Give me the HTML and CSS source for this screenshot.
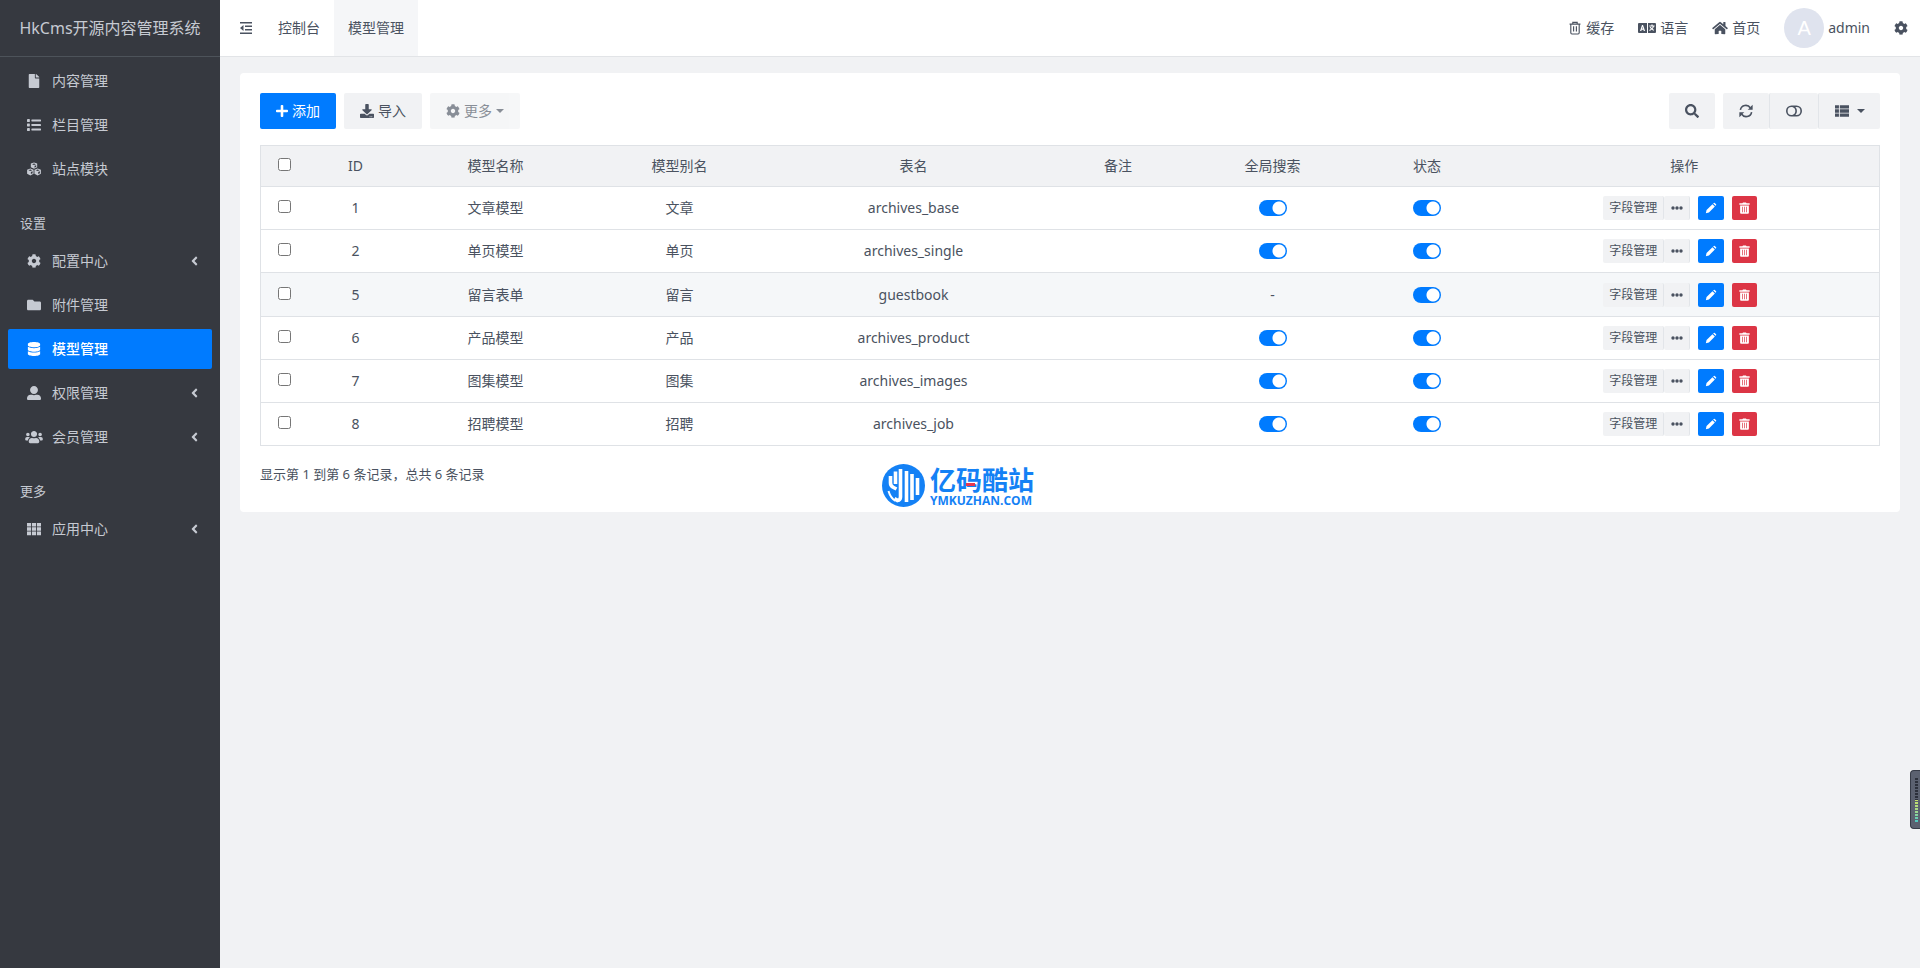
FILE: index.html
```html
<!DOCTYPE html>
<html lang="zh-CN">
<head>
<meta charset="utf-8">
<title>模型管理 - HkCms开源内容管理系统</title>
<link rel="stylesheet" href="styles.css">
</head>
<body>
<svg class="sprite" aria-hidden="true">
  <symbol id="i-file" viewBox="0 0 384 512"><path d="M224 136V0H24C10.700 0 0 10.700 0 24v464c0 13.300 10.700 24 24 24h336c13.300 0 24-10.700 24-24V160H248c-13.200 0-24-10.800-24-24zm160-14.100v6.100H256V0h6.100c6.400 0 12.500 2.500 17 7l97.900 98c4.500 4.500 7 10.600 7 16.900z"/></symbol>
  <symbol id="i-list" viewBox="0 0 512 512"><rect x="0" y="40" width="104" height="104" rx="16"/><rect x="0" y="204" width="104" height="104" rx="16"/><rect x="0" y="368" width="104" height="104" rx="16"/><rect x="160" y="56" width="352" height="72" rx="16"/><rect x="160" y="220" width="352" height="72" rx="16"/><rect x="160" y="384" width="352" height="72" rx="16"/></symbol>
  <symbol id="i-cubes" viewBox="0 0 512 512"><path fill-rule="evenodd" d="M256 14l116 44v134l-116 52-116-52V58zM256 52l-72 26 72 28 72-28zM276 140v66l62-28v-62zM122 236l118 46v150l-118 58L4 432V282zM122 274l-72 28 72 30 72-30zM142 366v76l62-32v-68zM390 236l118 46v150l-118 58-118-58V282zM390 274l-72 28 72 30 72-30zM410 366v76l62-32v-68z"/></symbol>
  <symbol id="i-cog" viewBox="0 0 512 512"><path d="M487.400 315.700l-42.600-24.600c4.300-23.200 4.300-47 0-70.200l42.600-24.600c4.900-2.800 7.100-8.600 5.500-14-11.100-35.600-30-67.800-54.700-94.600-3.800-4.100-10-5.100-14.800-2.300L380.800 110c-17.900-15.400-38.500-27.300-60.800-35.100V25.800c0-5.600-3.900-10.500-9.400-11.700-36.700-8.200-74.300-7.800-109.200 0-5.500 1.200-9.400 6.100-9.400 11.700V75c-22.200 7.900-42.800 19.800-60.800 35.100L88.700 85.500c-4.900-2.800-11-1.900-14.800 2.300-24.700 26.700-43.600 58.900-54.700 94.600-1.700 5.400.6 11.200 5.500 14L67.300 221c-4.300 23.200-4.300 47 0 70.200l-42.600 24.600c-4.900 2.800-7.100 8.600-5.500 14 11.100 35.600 30 67.800 54.700 94.600 3.800 4.100 10 5.100 14.800 2.300l42.600-24.600c17.900 15.400 38.500 27.300 60.800 35.100v49.200c0 5.600 3.900 10.500 9.400 11.700 36.700 8.200 74.300 7.800 109.200 0 5.500-1.200 9.400-6.100 9.400-11.700v-49.200c22.200-7.900 42.800-19.800 60.800-35.100l42.600 24.600c4.900 2.800 11 1.900 14.800-2.300 24.700-26.700 43.600-58.900 54.700-94.600 1.500-5.500-.7-11.300-5.600-14.100zM256 336c-44.100 0-80-35.900-80-80s35.900-80 80-80 80 35.900 80 80-35.900 80-80 80z"/></symbol>
  <symbol id="i-folder" viewBox="0 0 512 512"><path d="M464 128H272l-64-64H48C21.500 64 0 85.500 0 112v288c0 26.500 21.500 48 48 48h416c26.500 0 48-21.500 48-48V176c0-26.500-21.500-48-48-48z"/></symbol>
  <symbol id="i-db" viewBox="0 0 448 512"><path d="M448 73.143v45.714C448 159.143 347.667 192 224 192S0 159.143 0 118.857V73.143C0 32.857 100.333 0 224 0s224 32.857 224 73.143zM448 176v102.857C448 319.143 347.667 352 224 352S0 319.143 0 278.857V176c48.125 33.143 136.208 48.572 224 48.572S399.874 209.143 448 176zm0 160v102.857C448 479.143 347.667 512 224 512S0 479.143 0 438.857V336c48.125 33.143 136.208 48.572 224 48.572S399.874 369.143 448 336z"/></symbol>
  <symbol id="i-user" viewBox="0 0 512 512"><path d="M256 288c79.500 0 144-64.500 144-144S335.500 0 256 0 112 64.500 112 144s64.500 144 144 144zm128 32h-55.100c-22.200 10.200-46.900 16-72.900 16s-50.600-5.800-72.900-16H128C57.300 320 0 377.300 0 448v16c0 26.500 21.500 48 48 48h416c26.500 0 48-21.500 48-48v-16c0-70.700-57.300-128-128-128z"/></symbol>
  <symbol id="i-users" viewBox="0 0 640 512"><path d="M96 224c35.300 0 64-28.700 64-64s-28.700-64-64-64-64 28.700-64 64 28.700 64 64 64zm448 0c35.300 0 64-28.700 64-64s-28.700-64-64-64-64 28.700-64 64 28.700 64 64 64zm32 32h-64c-17.600 0-33.500 7.100-45.100 18.600 40.300 22.100 68.900 62 75.100 109.400h66c17.700 0 32-14.300 32-32v-32c0-35.300-28.700-64-64-64zm-256 0c61.900 0 112-50.100 112-112S381.900 32 320 32 208 82.100 208 144s50.100 112 112 112zm76.800 32h-8.300c-20.800 10-43.900 16-68.500 16s-47.600-6-68.500-16h-8.300C179.600 288 128 339.600 128 403.200V432c0 26.500 21.500 48 48 48h288c26.500 0 48-21.500 48-48v-28.800c0-63.600-51.600-115.200-115.200-115.200zm-223.700-13.400C161.500 263.100 145.600 256 128 256H64c-35.300 0-64 28.700-64 64v32c0 17.700 14.300 32 32 32h65.900c6.300-47.400 34.900-87.300 75.200-109.400z"/></symbol>
  <symbol id="i-grid" viewBox="0 0 512 512"><path d="M0 32h149v133H0zM181 32h150v133H181zM363 32h149v133H363zM0 190h149v132H0zM181 190h150v132H181zM363 190h149v132H363zM0 347h149v133H0zM181 347h150v133H181zM363 347h149v133H363z"/></symbol>
  <symbol id="i-left" viewBox="0 0 256 512"><path d="M31.700 239l136-136c9.400-9.400 24.600-9.400 33.900 0l22.600 22.600c9.400 9.400 9.400 24.600 0 33.900L127.900 256l96.400 96.400c9.400 9.400 9.400 24.600 0 33.900L201.700 409c-9.400 9.400-24.600 9.400-33.900 0l-136-136c-9.500-9.400-9.500-24.600-.1-34z"/></symbol>
  <symbol id="i-plus" viewBox="0 0 448 512"><path d="M416 208H272V64c0-17.670-14.330-32-32-32h-32c-17.670 0-32 14.330-32 32v144H32c-17.670 0-32 14.330-32 32v32c0 17.670 14.330 32 32 32h144v144c0 17.670 14.330 32 32 32h32c17.670 0 32-14.330 32-32V304h144c17.670 0 32-14.330 32-32v-32c0-17.670-14.330-32-32-32z"/></symbol>
  <symbol id="i-down" viewBox="0 0 512 512"><path fill-rule="evenodd" d="M216 0h80c13.300 0 24 10.700 24 24v168h87.700c17.800 0 26.700 21.500 14.100 34.100L269.700 378.300c-7.500 7.500-19.800 7.500-27.300 0L90.100 226.100c-12.600-12.600-3.700-34.100 14.100-34.100H192V24c0-13.300 10.700-24 24-24zm296 376v112c0 13.300-10.700 24-24 24H24c-13.300 0-24-10.700-24-24V376c0-13.300 10.700-24 24-24h146.700l49 49c20.100 20.100 52.500 20.100 72.600 0l49-49H488c13.300 0 24 10.700 24 24zm-124 88c0-11-9-20-20-20s-20 9-20 20 9 20 20 20 20-9 20-20zm64 0c0-11-9-20-20-20s-20 9-20 20 9 20 20 20 20-9 20-20z"/></symbol>
  <symbol id="i-search" viewBox="0 0 512 512"><path d="M505 442.700L405.300 343c-4.500-4.500-10.600-7-17-7H372c27.600-35.300 44-79.700 44-128C416 93.100 322.900 0 208 0S0 93.100 0 208s93.100 208 208 208c48.300 0 92.700-16.400 128-44v16.300c0 6.400 2.500 12.500 7 17l99.700 99.700c9.400 9.400 24.600 9.400 33.900 0l28.300-28.300c9.400-9.400 9.400-24.600.1-34zM208 336c-70.700 0-128-57.200-128-128 0-70.700 57.200-128 128-128 70.700 0 128 57.200 128 128 0 70.700-57.200 128-128 128z"/></symbol>
  <symbol id="i-sync" viewBox="0 0 16 16"><path fill="none" stroke="currentColor" stroke-width="1.800" d="M1.600 6.800A6.200 6.200 0 0 1 13 4.600M14.400 9.200A6.200 6.200 0 0 1 3 11.400"/><path d="M15.600.8v5.700H9.900l2-1.700 1.600-2zM.4 15.200V9.500h5.700l-2 1.700-1.600 2z"/></symbol>
  <symbol id="i-toggle" viewBox="0 0 16 16"><path fill="none" stroke="currentColor" stroke-width="1.600" d="M5.500 3.300h5a4.700 4.700 0 0 1 0 9.400h-5a4.700 4.700 0 0 1 0-9.400zM6.800 3.500a4.700 4.700 0 0 1 0 9"/></symbol>
  <symbol id="i-cols" viewBox="0 0 512 512"><path d="M0 48h144v116H0zM176 48h336v116H176zM0 196h144v120H0zM176 196h336v120H176zM0 348h144v116H0zM176 348h336v116H176z"/></symbol>
  <symbol id="i-caret" viewBox="0 0 8 4"><path d="M0 0h8L4 4z"/></symbol>
  <symbol id="i-outdent" viewBox="0 0 14 14"><path d="M1 1h12v1.600H1zM6 4.400h7V6H6zM6 8h7v1.600H6zM1 11.400h12V13H1zM1 7l3.500-3v6z"/></symbol>
  <symbol id="i-bin" viewBox="0 0 14 16"><path fill="none" stroke="currentColor" stroke-width="1.300" d="M.8 3.500h12.400M4.500 3.300V1.500h5v1.800M2.200 3.500v10q0 1.300 1.300 1.300h7q1.300 0 1.300-1.300v-10M5.400 6v6M8.600 6v6"/></symbol>
  <symbol id="i-lang" viewBox="0 0 18 12"><path fill-rule="evenodd" d="M1 1h8v10H1q-1 0-1-1V2q0-1 1-1zM10 1h7q1 0 1 1v8q0 1-1 1h-7zM4 3L2 9h1.300l.4-1.200h1.700L5.800 9h1.300L5 3zM4.500 4.800l.5 1.800H4zM11.300 3.500v1h3.500q-.3 1-1 1.700-.6-.5-.9-1.100h-1.200q.4 1.100 1.200 1.900-.8.600-1.700.9l.5 1q1.200-.5 2.100-1.300.8.700 1.800 1.200l.6-1q-.8-.3-1.600-.9 1-1.100 1.300-2.400h.7v-1h-2v-1h-1.200v1z"/></symbol>
  <symbol id="i-home" viewBox="0 0 576 512"><path d="M280.370 148.260L96 300.110V464a16 16 0 0 0 16 16l112.060-.29a16 16 0 0 0 15.920-16V368a16 16 0 0 1 16-16h64a16 16 0 0 1 16 16v95.640a16 16 0 0 0 16 16.050L464 480a16 16 0 0 0 16-16V300L295.670 148.260a12.190 12.190 0 0 0-15.300 0zM571.600 251.470L488 182.560V44.050a12 12 0 0 0-12-12h-56a12 12 0 0 0-12 12v72.610L318.470 43a48 48 0 0 0-61 0L4.340 251.470a12 12 0 0 0-1.600 16.900l25.500 31A12 12 0 0 0 45.150 301l235.220-193.740a12.190 12.190 0 0 1 15.300 0L530.900 301a12 12 0 0 0 16.900-1.600l25.500-31a12 12 0 0 0-1.700-16.930z"/></symbol>
  <symbol id="i-dots" viewBox="0 0 12 12"><circle cx="2" cy="6" r="1.700"/><circle cx="6" cy="6" r="1.700"/><circle cx="10" cy="6" r="1.700"/></symbol>
  <symbol id="i-pen" viewBox="0 0 14 14"><path d="M1 13l.8-3.600 6.900-6.900 2.800 2.800-6.900 6.900zM9.500 1.700l.7-.6q.6-.5 1.200 0l1.500 1.500q.5.600 0 1.200l-.6.700z"/></symbol>
  <symbol id="i-trash" viewBox="0 0 12 14"><path d="M0 1.500h3.500L4.300.5h3.400l.8 1H12v1.700H0z"/><path fill-rule="evenodd" d="M.9 4h10.200v8.500q0 1.100-1.100 1.100H2Q.9 13.600.9 12.500zM3.100 5.500v6.500h.8V5.500zM5.600 5.500v6.500h.8V5.500zM8.100 5.500v6.500h.8V5.500z"/></symbol>
</svg>

<div class="page">
  <aside class="sidebar">
    <a class="brand" href="#">HkCms开源内容管理系统</a>
    <nav class="menu">
      <a class="item" href="#"><svg class="ico"><use href="#i-file"/></svg>内容管理</a>
      <a class="item" href="#"><svg class="ico"><use href="#i-list"/></svg>栏目管理</a>
      <a class="item" href="#"><svg class="ico"><use href="#i-cubes"/></svg>站点模块</a>
      <h2 class="group">设置</h2>
      <a class="item" href="#"><svg class="ico"><use href="#i-cog"/></svg>配置中心<svg class="arrow"><use href="#i-left"/></svg></a>
      <a class="item" href="#"><svg class="ico"><use href="#i-folder"/></svg>附件管理</a>
      <a class="item active" href="#"><svg class="ico"><use href="#i-db"/></svg>模型管理</a>
      <a class="item" href="#"><svg class="ico"><use href="#i-user"/></svg>权限管理<svg class="arrow"><use href="#i-left"/></svg></a>
      <a class="item" href="#"><svg class="ico"><use href="#i-users"/></svg>会员管理<svg class="arrow"><use href="#i-left"/></svg></a>
      <h2 class="group">更多</h2>
      <a class="item" href="#"><svg class="ico"><use href="#i-grid"/></svg>应用中心<svg class="arrow"><use href="#i-left"/></svg></a>
    </nav>
  </aside>

  <div class="body">
    <header class="topbar">
      <nav class="tabs">
        <button class="fold" type="button" aria-label="折叠菜单"><svg class="ico"><use href="#i-outdent"/></svg></button>
        <a class="tab" href="#">控制台</a>
        <a class="tab current" href="#">模型管理</a>
      </nav>
      <nav class="tools">
        <a class="tool" href="#"><svg class="ico"><use href="#i-bin"/></svg>缓存</a>
        <a class="tool" href="#"><svg class="ico wide"><use href="#i-lang"/></svg>语言</a>
        <a class="tool" href="#"><svg class="ico home"><use href="#i-home"/></svg>首页</a>
        <a class="account" href="#"><span class="avatar">A</span>admin</a>
        <a class="tool" href="#" aria-label="设置"><svg class="ico"><use href="#i-cog"/></svg></a>
      </nav>
    </header>

    <main class="card">
      <div class="toolbar">
        <button class="btn primary" type="button"><svg class="ico"><use href="#i-plus"/></svg>添加</button>
        <button class="btn" type="button"><svg class="ico"><use href="#i-down"/></svg>导入</button>
        <button class="btn" type="button" disabled><svg class="ico"><use href="#i-cog"/></svg>更多<svg class="caret"><use href="#i-caret"/></svg></button>
        <button class="btn search" type="button" aria-label="搜索"><svg class="ico"><use href="#i-search"/></svg></button>
        <div class="btns">
          <button class="btn" type="button" aria-label="刷新"><svg class="ico"><use href="#i-sync"/></svg></button>
          <button class="btn" type="button" aria-label="切换"><svg class="ico toggle"><use href="#i-toggle"/></svg></button>
          <button class="btn columns" type="button" aria-label="列"><svg class="ico"><use href="#i-cols"/></svg><svg class="caret"><use href="#i-caret"/></svg></button>
        </div>
      </div>

      <table class="grid">
        <colgroup><col class="c-check"><col class="c-id"><col class="c-name"><col class="c-name"><col class="c-table"><col class="c-flag"><col class="c-name"><col class="c-flag"><col></colgroup>
        <thead>
          <tr><th><input type="checkbox" aria-label="全选"></th><th>ID</th><th>模型名称</th><th>模型别名</th><th>表名</th><th>备注</th><th>全局搜索</th><th>状态</th><th>操作</th></tr>
        </thead>
        <tbody>
          <tr><td><input type="checkbox" aria-label="选择 1"></td><td>1</td><td>文章模型</td><td>文章</td><td>archives_base</td><td></td><td><input class="switch" type="checkbox" aria-label="全局搜索" checked></td><td><input class="switch" type="checkbox" aria-label="状态" checked></td><td><div class="ops"><div class="split"><button type="button">字段管理</button><button type="button" aria-label="更多"><svg class="ico"><use href="#i-dots"/></svg></button></div><button class="edit" type="button" aria-label="编辑"><svg class="ico"><use href="#i-pen"/></svg></button><button class="del" type="button" aria-label="删除"><svg class="ico"><use href="#i-trash"/></svg></button></div></td></tr>
          <tr><td><input type="checkbox" aria-label="选择 2"></td><td>2</td><td>单页模型</td><td>单页</td><td>archives_single</td><td></td><td><input class="switch" type="checkbox" aria-label="全局搜索" checked></td><td><input class="switch" type="checkbox" aria-label="状态" checked></td><td><div class="ops"><div class="split"><button type="button">字段管理</button><button type="button" aria-label="更多"><svg class="ico"><use href="#i-dots"/></svg></button></div><button class="edit" type="button" aria-label="编辑"><svg class="ico"><use href="#i-pen"/></svg></button><button class="del" type="button" aria-label="删除"><svg class="ico"><use href="#i-trash"/></svg></button></div></td></tr>
          <tr class="hovered"><td><input type="checkbox" aria-label="选择 5"></td><td>5</td><td>留言表单</td><td>留言</td><td>guestbook</td><td></td><td>-</td><td><input class="switch" type="checkbox" aria-label="状态" checked></td><td><div class="ops"><div class="split"><button type="button">字段管理</button><button type="button" aria-label="更多"><svg class="ico"><use href="#i-dots"/></svg></button></div><button class="edit" type="button" aria-label="编辑"><svg class="ico"><use href="#i-pen"/></svg></button><button class="del" type="button" aria-label="删除"><svg class="ico"><use href="#i-trash"/></svg></button></div></td></tr>
          <tr><td><input type="checkbox" aria-label="选择 6"></td><td>6</td><td>产品模型</td><td>产品</td><td>archives_product</td><td></td><td><input class="switch" type="checkbox" aria-label="全局搜索" checked></td><td><input class="switch" type="checkbox" aria-label="状态" checked></td><td><div class="ops"><div class="split"><button type="button">字段管理</button><button type="button" aria-label="更多"><svg class="ico"><use href="#i-dots"/></svg></button></div><button class="edit" type="button" aria-label="编辑"><svg class="ico"><use href="#i-pen"/></svg></button><button class="del" type="button" aria-label="删除"><svg class="ico"><use href="#i-trash"/></svg></button></div></td></tr>
          <tr><td><input type="checkbox" aria-label="选择 7"></td><td>7</td><td>图集模型</td><td>图集</td><td>archives_images</td><td></td><td><input class="switch" type="checkbox" aria-label="全局搜索" checked></td><td><input class="switch" type="checkbox" aria-label="状态" checked></td><td><div class="ops"><div class="split"><button type="button">字段管理</button><button type="button" aria-label="更多"><svg class="ico"><use href="#i-dots"/></svg></button></div><button class="edit" type="button" aria-label="编辑"><svg class="ico"><use href="#i-pen"/></svg></button><button class="del" type="button" aria-label="删除"><svg class="ico"><use href="#i-trash"/></svg></button></div></td></tr>
          <tr><td><input type="checkbox" aria-label="选择 8"></td><td>8</td><td>招聘模型</td><td>招聘</td><td>archives_job</td><td></td><td><input class="switch" type="checkbox" aria-label="全局搜索" checked></td><td><input class="switch" type="checkbox" aria-label="状态" checked></td><td><div class="ops"><div class="split"><button type="button">字段管理</button><button type="button" aria-label="更多"><svg class="ico"><use href="#i-dots"/></svg></button></div><button class="edit" type="button" aria-label="编辑"><svg class="ico"><use href="#i-pen"/></svg></button><button class="del" type="button" aria-label="删除"><svg class="ico"><use href="#i-trash"/></svg></button></div></td></tr>
        </tbody>
      </table>
      <p class="summary">显示第 1 到第 6 条记录，总共 6 条记录</p>
    </main>
  </div>

  <div class="mark">
    <svg class="mark-logo" viewBox="0 0 43 43"><circle cx="21.500" cy="21.500" r="21.500" fill="#1481f5"/><g fill="none" stroke="#fff" stroke-width="3.600"><path d="M8.500 12v7q0 3 3 4.500l3 1.500M13.500 7.500v12.500M18.500 5v28q0 3-3 3.500l-3-2"/><path d="M24.500 38V7M30 36V10M35.500 31V14"/></g><path d="M6.500 27q2 7 7 10" fill="none" stroke="#fff" stroke-width="2"/></svg>
    <div class="mark-text"><span class="mark-cn">亿码酷站</span><span class="mark-en">YMKUZHAN.COM</span><i class="mark-dash"></i></div>
  </div>
  <div class="meter"><span class="meter-bar"></span></div>
</div>
</body>
</html>
```

FILE: styles.css
```css
* { box-sizing: border-box; }

body {
  margin: 0;
  background: #f1f2f4;
  color: #4a5260;
  font: 14px/20px "Noto Sans", "Noto Sans CJK SC", sans-serif;
}

a { color: inherit; text-decoration: none; }
button { font: inherit; color: inherit; border: 0; padding: 0; margin: 0; cursor: pointer; }
svg { flex: none; fill: currentColor; }

.sprite { display: none; }
.ico { width: 14px; height: 14px; }
.caret { width: 8px; height: 4px; }

.page { position: relative; display: flex; min-height: 100vh; overflow: hidden; }

/* Sidebar */
.sidebar { flex: none; width: 220px; background: #363940; color: #c6cad2; }
.brand {
  display: flex;
  align-items: center;
  justify-content: center;
  height: 57px;
  border-bottom: 1px solid #4d535a;
  font-size: 16px;
  line-height: 24px;
  white-space: nowrap;
}
.menu { display: flex; flex-direction: column; gap: 4px; padding: 4px 8px; }
.item {
  display: flex;
  align-items: center;
  height: 40px;
  padding: 0 14px 0 17px;
  border-radius: 2px;
}
.item .ico { width: 18px; margin-right: 9px; }
.item .arrow { width: 7px; height: 14px; margin-left: auto; }
.item.active { background: #007bff; color: #fff; font-weight: 500; }
.group {
  height: 44px;
  margin: 0;
  padding: 20px 12px 4px;
  font-size: 13px;
  font-weight: 400;
  line-height: 20px;
}

/* Top bar */
.body { flex: 1; min-width: 0; }
.topbar {
  display: flex;
  justify-content: space-between;
  height: 57px;
  background: #fff;
  border-bottom: 1px solid #e2e4e7;
}
.tabs { display: flex; }
.fold { display: flex; align-items: center; padding: 0 11px 0 19px; background: none; }
.tab { display: flex; align-items: center; padding: 0 14px; }
.tab.current { background: #f5f6f8; }
.tools { display: flex; align-items: center; gap: 24px; padding-right: 12px; }
.tool { display: flex; align-items: center; gap: 4px; }
.tool .wide { width: 18px; }
.tool .home { width: 16px; }
.account { display: flex; align-items: center; gap: 4px; }
.avatar {
  display: flex;
  align-items: center;
  justify-content: center;
  width: 40px;
  height: 40px;
  border-radius: 50%;
  background: #dfe3ee;
  color: #fff;
  font: 20px/40px "Liberation Sans", sans-serif;
}

/* Card */
.card { margin: 16px 20px; padding: 20px; background: #fff; border-radius: 4px; }
.toolbar { display: flex; gap: 8px; margin-bottom: 16px; }
.btn {
  display: flex;
  align-items: center;
  gap: 4px;
  height: 36px;
  padding: 0 16px;
  border-radius: 2px;
  background: #f1f2f4;
}
.btn.primary { background: #007bff; color: #fff; }
.btn.primary .ico { width: 12px; }
.btn:disabled { opacity: .65; }
.btn.search { margin-left: auto; }
.btns { display: flex; }
.btns .btn + .btn { border-left: 1px solid #e2e5e9; }
.btn .toggle { width: 16px; height: 16px; }
.btn.columns { gap: 8px; padding-right: 15px; }

.grid {
  width: 100%;
  table-layout: fixed;
  border-collapse: collapse;
  border: 1px solid #dfe2e6;
  text-align: center;
}
.grid th, .grid td { padding: 0; font-weight: 400; border-bottom: 1px solid #dfe2e6; }
.grid th { height: 41px; background: #f1f2f4; }
.grid td { height: 43px; }
.grid .hovered td { height: 44px; background: #f5f7f9; }
.grid input { display: block; margin: 0 auto 3px; }
.c-check { width: 47px; }
.c-id { width: 96px; }
.c-name { width: 184px; }
.c-table { width: 284px; }
.c-flag { width: 125px; }

.grid .switch {
  appearance: none;
  width: 28px;
  height: 16px;
  margin: 0 auto;
  border-radius: 8px;
  background: radial-gradient(circle at 20px 8px, #fff 6px, #007bff 7px);
}

.ops { display: flex; justify-content: center; gap: 8px; padding-right: 8px; font-size: 12px; }
.ops button { display: flex; align-items: center; justify-content: center; height: 24px; padding: 0 7px; border-radius: 2px; }
.ops .ico { width: 12px; height: 12px; }
.split { display: flex; }
.split button { padding: 0 6px; background: #f1f2f4; border-right: 1px solid #e2e5e9; }
.ops .split button + button { padding: 0 6px 0 7px; }
.ops .edit { background: #007bff; color: #fff; }
.ops .del { background: #dc3545; color: #fff; }
.ops .del .ico { width: 11px; }

.summary { margin: 18px 0 8px; font-size: 13px; line-height: 20px; }

/* Floating site mark and level meter */
.mark {
  position: absolute;
  top: 464px;
  left: 50%;
  margin-left: -78px;
  display: flex;
  gap: 5px;
  color: #1481f5;
}
.mark-logo { width: 43px; height: 43px; }
.mark-text { position: relative; display: flex; flex-direction: column; }
.mark-cn { font: 700 26px/29px "Noto Sans CJK SC", sans-serif; }
.mark-en { font: 700 12px/16px "Open Sans", sans-serif; }
.mark-dash { position: absolute; left: 36px; top: 19px; width: 9px; height: 3px; background: #e8384f; }

.meter {
  position: absolute;
  right: 0;
  top: 770px;
  width: 10px;
  height: 59px;
  padding: 6px 2px 6px 4px;
  border: 1px solid #363b47;
  border-right: 0;
  border-radius: 4px 0 0 4px;
  background: #5b6170;
}
.meter-bar {
  display: block;
  height: 100%;
  background:
    repeating-linear-gradient(#5b6170 0 1px, transparent 1px 3px),
    linear-gradient(#2c303b 52%, #c5e06a 52%, #a5d98a 75%, #4cc7c4);
}
```
